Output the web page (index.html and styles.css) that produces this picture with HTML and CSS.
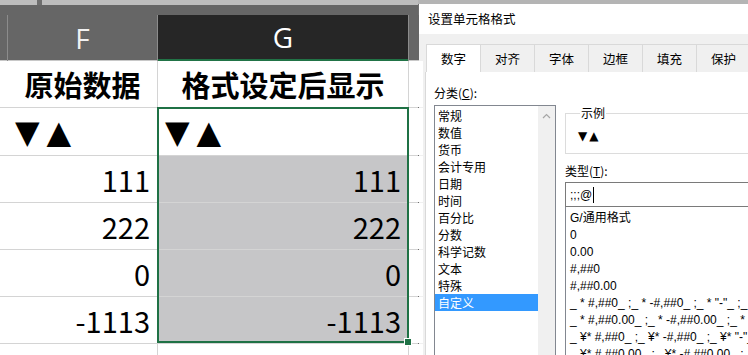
FILE: index.html
```html
<!DOCTYPE html>
<html lang="zh-CN">

<head>
    <meta charset="UTF-8" />
    <title>设置单元格格式</title>
    <link rel="stylesheet" href="styles.css">
</head>

<body>
    <div class="screen">
        <div class="sheet">
            <div class="topbar">
                <span class="namebox"></span>
                <span class="bar-sep"></span>
                <span class="fxbox"></span>
            </div>
            <div class="band"></div>
            <div class="colheads">
                <div class="ch"></div>
                <div class="ch">F</div>
                <div class="ch picked">G</div>
                <div class="ch"></div>
            </div>
            <div class="grid">
                <div class="cell"></div>
                <div class="cell title">原始数据</div>
                <div class="cell title">格式设定后显示</div>
                <div class="cell"></div>

                <div class="cell"></div>
                <div class="cell marks">▼▲</div>
                <div class="cell marks">▼▲</div>
                <div class="cell"></div>

                <div class="cell"></div>
                <div class="cell num">111</div>
                <div class="cell num hl">111</div>
                <div class="cell"></div>

                <div class="cell"></div>
                <div class="cell num">222</div>
                <div class="cell num hl">222</div>
                <div class="cell"></div>

                <div class="cell"></div>
                <div class="cell num">0</div>
                <div class="cell num hl">0</div>
                <div class="cell"></div>

                <div class="cell"></div>
                <div class="cell num">-1113</div>
                <div class="cell num hl">-1113</div>
                <div class="cell"></div>

                <div class="cell"></div>
                <div class="cell"></div>
                <div class="cell"></div>
                <div class="cell"></div>
            </div>
            <!-- selected range G2:G6 -->
            <div class="selection"><span class="handle"></span></div>
        </div>

        <div class="dialog">
            <div class="dlg-title">设置单元格格式</div>
            <div class="tabs">
                <div class="tab active">数字</div>
                <div class="tab">对齐</div>
                <div class="tab">字体</div>
                <div class="tab">边框</div>
                <div class="tab">填充</div>
                <div class="tab">保护</div>
            </div>
            <div class="panel">
                <div class="cat-col">
                    <div class="lbl">分类(<u>C</u>):</div>
                    <div class="listbox">
                        <ul class="items">
                            <li>常规</li>
                            <li>数值</li>
                            <li>货币</li>
                            <li>会计专用</li>
                            <li>日期</li>
                            <li>时间</li>
                            <li>百分比</li>
                            <li>分数</li>
                            <li>科学记数</li>
                            <li>文本</li>
                            <li>特殊</li>
                            <li class="sel">自定义</li>
                        </ul>
                        <div class="scroll">
                            <svg width="17" height="14" viewBox="0 0 17 14">
                                <path d="M5 9 L8.5 5.5 L12 9" fill="none" stroke="#a6a6a6" stroke-width="1.2" />
                            </svg>
                        </div>
                    </div>
                </div>
                <div class="type-col">
                    <fieldset class="sample">
                        <legend>示例</legend>
                        <span class="sample-val">▼▲</span>
                    </fieldset>
                    <div class="lbl type-lbl">类型(<u>T</u>):</div>
                    <div class="type-input">;;;@<span class="caret"></span></div>
                    <ul class="type-list">
                        <li>G/通用格式</li>
                        <li>0</li>
                        <li>0.00</li>
                        <li>#,##0</li>
                        <li>#,##0.00</li>
                        <li>_ * #,##0_ ;_ * -#,##0_ ;_ * "-"_ ;_ @_</li>
                        <li>_ * #,##0.00_ ;_ * -#,##0.00_ ;_ * "-"??_ ;_ @_</li>
                        <li>_ ¥* #,##0_ ;_ ¥* -#,##0_ ;_ ¥* "-"_ ;_ @_</li>
                        <li>_ ¥* #,##0.00_ ;_ ¥* -#,##0.00_ ;_ ¥* "-"??_ ;_ @_</li>
                    </ul>
                </div>
            </div>
        </div>
    </div>
</body>

</html>
```

FILE: styles.css
```css
body {
    margin: 0;
    background: #fff;
    font-family: "Noto Sans CJK SC", sans-serif;
}

.screen {
    display: flex;
    width: 748px;
    height: 355px;
    overflow: hidden;
    background: #b4b4b4;
}

/* ---------- sheet ---------- */

.sheet {
    position: relative;
    width: 418px;
    flex: none;
    background: #fff;
}

.topbar {
    display: flex;
    height: 5px;
    background: #bdbdbd;
}

.namebox {
    width: 37px;
}

.bar-sep {
    width: 5px;
    background: #6e6e6e;
}

.fxbox {
    flex: 1;
}

.band {
    height: 10px;
    background: #666;
}

.colheads {
    display: grid;
    grid-template-columns: 7px 149px 250px 10px;
    column-gap: 1px;
    height: 46px;
    background: #8c8c8c;
}

.ch {
    display: flex;
    align-items: center;
    justify-content: center;
    background: #666;
    border-bottom: 1px solid #c8c8c8;
    color: #f2f2f2;
    font-family: "Open Sans", sans-serif;
    font-size: 28px;
}

.ch.picked {
    background: #262626;
    color: #fff;
    border-bottom: 2px solid #217346;
}

.grid {
    display: grid;
    grid-template-columns: 7px 149px 250px 10px;
    grid-template-rows: 46px 47px 46px 46px 46px 46px 20px;
    gap: 1px;
    background: #d4d4d4;
}

.cell {
    display: flex;
    align-items: center;
    background: #fff;
    color: #000;
    padding: 0 7px;
    white-space: nowrap;
    overflow: hidden;
}

.cell.title {
    justify-content: center;
    padding: 0;
    font-size: 29px;
    font-weight: 700;
}

.cell.marks {
    font-family: "DejaVu Sans", sans-serif;
    font-size: 32px;
    letter-spacing: 7px;
    line-height: 1;
    padding-left: 7px;
}

.cell.num {
    justify-content: flex-end;
    font-size: 29px;
}

.cell.hl {
    background: #c6c6c8;
}

.selection {
    position: absolute;
    left: 157px;
    top: 107px;
    width: 252px;
    height: 236px;
    box-sizing: border-box;
    border: 2px solid #1f7145;
}

.handle {
    position: absolute;
    right: -5px;
    bottom: -5px;
    width: 6px;
    height: 6px;
    background: #1f7145;
    border: 1px solid #fff;
}

/* ---------- dialog ---------- */

.dialog {
    display: flex;
    flex-direction: column;
    width: 329px;
    flex: none;
    margin-top: 4px;
    border-left: 1px solid #707070;
    background: #f0f0f0;
    overflow: hidden;
    font-size: 12px;
}

.dlg-title {
    height: 30px;
    line-height: 30px;
    padding-left: 9px;
    background: #fff;
    font-size: 12.5px;
    color: #000;
}

.tabs {
    display: flex;
    margin: 10px 0 0 7px;
}

.tab {
    width: 54px;
    height: 28px;
    box-sizing: border-box;
    display: flex;
    align-items: center;
    justify-content: center;
    border: 1px solid #d9d9d9;
    border-left: none;
    border-bottom: none;
    font-size: 12.5px;
    flex: none;
}

.tab.active {
    width: 55px;
    background: #fff;
    border-left: 1px solid #d9d9d9;
}

.panel {
    flex: 1;
    display: flex;
    gap: 9px;
    margin-left: 6px;
    padding-left: 8px;
    background: #fff;
    border-left: 1px solid #d9d9d9;
}

.lbl {
    line-height: 16px;
    color: #000;
}

.cat-col {
    width: 122px;
    flex: none;
    padding-top: 13px;
}

.listbox {
    display: flex;
    margin-top: 4px;
    height: 260px;
    border: 1px solid #828790;
}

.items {
    flex: 1;
    list-style: none;
    margin: 0;
    padding: 1px 0 0;
}

.items li {
    line-height: 17px;
    padding-left: 3px;
}

.items li.sel {
    background: #3399ff;
    color: #fff;
}

.scroll {
    width: 17px;
    background: #f0f0f0;
    padding-top: 3px;
}

.type-col {
    width: 220px;
    flex: none;
    padding-top: 33px;
}

.sample {
    margin: 0;
    height: 49px;
    box-sizing: border-box;
    padding: 0 0 0 12px;
    border: 1px solid #dcdcdc;
    border-right: none;
}

.sample legend {
    padding: 0 1px;
    margin-left: 2px;
    line-height: 16px;
}

.sample-val {
    display: block;
    margin-top: 8px;
    font-family: "DejaVu Sans", sans-serif;
    font-size: 12px;
    letter-spacing: 2px;
}

.type-lbl {
    margin-top: 9px;
}

.type-input {
    display: flex;
    align-items: center;
    height: 25px;
    box-sizing: border-box;
    margin-top: 3px;
    padding-left: 4px;
    border: 1px solid #7a7a7a;
    font-family: "Liberation Sans", sans-serif;
}

.caret {
    width: 1px;
    height: 16px;
    margin-left: 1px;
    background: #000;
}

.type-list {
    list-style: none;
    margin: 0;
    padding: 3px 0 0 4px;
    height: 160px;
    border: 1px solid #828790;
    border-top: none;
    font-family: "Liberation Sans", "Noto Sans CJK SC", sans-serif;
    white-space: nowrap;
}

.type-list li {
    line-height: 17px;
}
```
